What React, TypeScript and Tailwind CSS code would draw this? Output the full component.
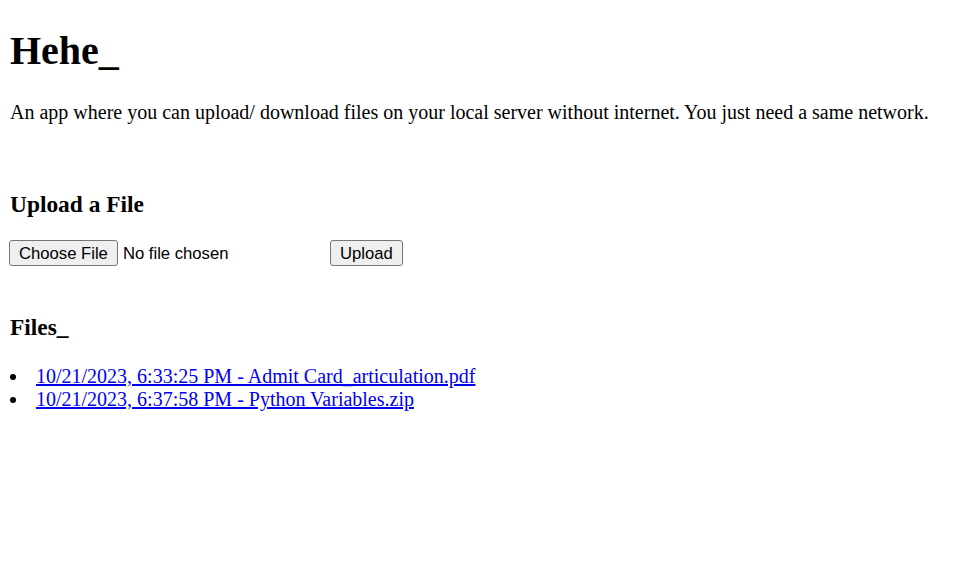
export default function App() {
  const serif = { fontFamily: '"Liberation Serif", "Times New Roman", serif' };
  const files = [
    "10/21/2023, 6:33:25 PM - Admit Card_articulation.pdf",
    "10/21/2023, 6:37:58 PM - Python Variables.zip",
  ];
  return (
    <div className="min-h-[587px] bg-white px-[10px] text-black" style={serif}>
      <h1 className="pt-[28px] text-[40px] font-bold leading-[46px]">Hehe_</h1>
      <p className="mt-[27px] text-[20px] leading-[23px]">
        An app where you can upload/ download files on your local server without internet. You just need a same network.
      </p>
      <h3 className="mt-[67px] text-[23.4px] font-bold leading-[27px]">Upload a File</h3>
      <div className="mt-[22px] flex items-center font-['Liberation_Sans',Arial,sans-serif] text-[16.67px]">
        <span className="flex w-[316px] items-center">
          <button className="ml-[-1px] h-[26px] rounded-[3px] border border-[#767676] bg-[#efefef] px-[9px] leading-[19px] text-black">
            Choose File
          </button>
          <span className="ml-[5px] leading-[19px]">No file chosen</span>
        </span>
        <button className="ml-[4px] h-[26px] rounded-[3px] border border-[#767676] bg-[#efefef] px-[9px] leading-[19px] text-black">
          Upload
        </button>
      </div>
      <h3 className="mt-[48px] text-[23.4px] font-bold leading-[27px]">Files_</h3>
      <ul className="mt-[24px] text-[20px] leading-[23px]">
        {files.map((f) => (
          <li key={f} className="flex items-center">
            <span className="flex w-[26px] shrink-0 items-center">
              <span className="ml-[0px] block h-[6px] w-[6px] rounded-full bg-black" />
            </span>
            <a href="#" className="text-[#0000ee] underline">
              {f}
            </a>
          </li>
        ))}
      </ul>
    </div>
  );
}
